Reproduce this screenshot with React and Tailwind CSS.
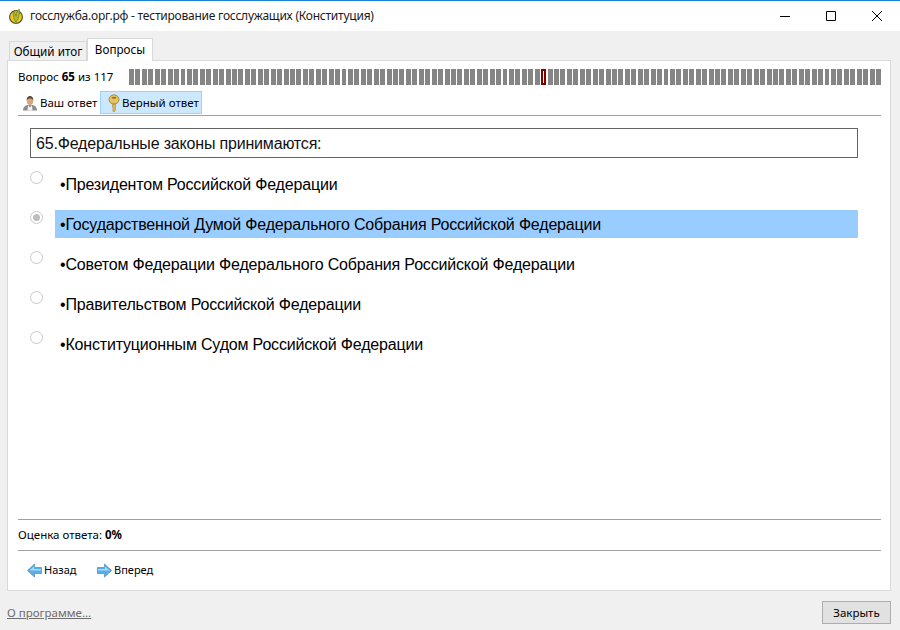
import React from "react";

const uiFont = "font-['Noto_Sans','DejaVu_Sans',sans-serif]";

const answers = [
  "Президентом Российской Федерации",
  "Государственной Думой Федерального Собрания Российской Федерации",
  "Советом Федерации Федерального Собрания Российской Федерации",
  "Правительством Российской Федерации",
  "Конституционным Судом Российской Федерации",
];

const Logo = () => (
  <svg width="16" height="16" viewBox="0 0 16 16">
    <circle cx="8" cy="9" r="6.4" fill="#f5c518" stroke="#5a5a3a" strokeWidth="1.2" />
    <path d="M8 14C5.500 11.500 4.800 7.500 5.800 4 7.300 5.300 8 6.800 8 8.300c0-2.300 1-5 3.200-7.300 .8 4.500-.3 9.800-3.200 13z" fill="#a8bd3a" stroke="#5d7020" strokeWidth=".6" />
  </svg>
);

const UserIcon = () => (
  <svg width="16" height="16" viewBox="0 0 16 16">
    <path d="M1 15.500c0-3.500 2-5 4.500-5.500h5c2.500 .5 4.500 2 4.500 5.500z" fill="#8b8b8b" />
    <path d="M6 10l2 2.500 2-2.500 .5 5.500h-5z" fill="#f0f0f0" />
    <ellipse cx="8" cy="6" rx="3.200" ry="4" fill="#d9a57f" />
    <path d="M4.700 5.500C4.500 2.500 6 1 8 1s3.500 1.500 3.300 4.500C10.500 4 9.500 3.500 8 3.500S5.500 4 4.700 5.500z" fill="#5a4436" />
  </svg>
);

const KeyIcon = () => (
  <svg width="14" height="19" viewBox="0 0 14 19" className="mt-[1px]">
    <ellipse cx="7" cy="5.500" rx="5" ry="4.600" fill="#e8c25e" stroke="#a98a3a" />
    <ellipse cx="7" cy="3.800" rx="2.400" ry="1" fill="#8f7430" />
    <path d="M5.600 10h2.800v6L7 18l-1.400-1.200 .9-.9-.9-.8 .9-.9-.9-.8z" fill="#e3bb55" stroke="#a98a3a" strokeWidth=".7" />
  </svg>
);

const ArrowIcon = ({ flip }) => (
  <svg width="15" height="15" viewBox="0 0 15 15" className={flip ? "-scale-x-100" : ""}>
    <path d="M.5 7.500L7.500 1v3.500h7v6h-7V14z" fill="#57ade8" stroke="#6f9fc4" />
    <path d="M2.500 7.500L7 3.500v2.500h7v1.500z" fill="#a9dbfa" />
  </svg>
);

const Radio = ({ checked }) => (
  <div className="w-[13px] h-[13px] mt-[1px] rounded-full border border-[#c9c9c9] bg-white flex items-center justify-center">
    {checked && <div className="w-[7px] h-[7px] rounded-full bg-[#bdbdbd]" />}
  </div>
);

const App = () => {
  const bars = Array.from({ length: 117 }, (_, i) => i + 1);

  return (
    <div className={`w-[900px] h-[630px] flex flex-col bg-[#f0f0f0] overflow-hidden text-[11.5px] text-black ${uiFont}`}>
      {/* title bar */}
      <div className="h-[31px] shrink-0 bg-white border-t border-[#1883d7] flex items-center">
        <div className="ml-[8px] mr-[6px] flex">
          <Logo />
        </div>
        <span className="text-[12px] tracking-[-0.23px] text-[#1a1a1a]">госслужба.орг.рф - тестирование госслужащих (Конституция)</span>
        <div className="ml-auto flex items-center">
          <svg width="46" height="30" viewBox="0 0 46 30">
            <path d="M18 15.500h10" stroke="#000" />
          </svg>
          <svg width="46" height="30" viewBox="0 0 46 30">
            <path d="M18.500 10.500h9v9h-9z" fill="none" stroke="#000" />
          </svg>
          <svg width="46" height="30" viewBox="0 0 46 30">
            <path d="M18 10l10 10M28 10L18 20" stroke="#000" />
          </svg>
        </div>
      </div>

      {/* tabs */}
      <div className="h-[29px] shrink-0 pl-[9px] pt-[6px] flex items-end text-[11.7px]">
        <div className="h-[20px] w-[78px] -mb-[1px] bg-[#f0f0f0] border border-b-0 border-[#d9d9d9] flex items-center justify-center">
          Общий итог
        </div>
        <div className="h-[23px] w-[66px] -mb-[1px] bg-white border border-b-0 border-[#d9d9d9] flex items-center justify-center relative z-10">
          Вопросы
        </div>
      </div>

      {/* panel */}
      <div className="ml-[7px] mr-[9px] h-[531px] shrink-0 bg-white border border-[#d9d9d9] flex flex-col pl-[10px] pr-[9px]">
        <div className="h-[16px] mt-[8px] flex items-center">
          <span className="w-[111px] shrink-0 whitespace-nowrap">
            Вопрос <b>65</b> из 117
          </span>
          <div className="flex-1 grid grid-cols-[repeat(117,1fr)] gap-x-[1.5px] h-[16px]">
            {bars.map((n) =>
              n === 65 ? (
                <div key={n} className="bg-white border-2 border-[#800000]" />
              ) : (
                <div key={n} className="bg-[#858585]" />
              )
            )}
          </div>
        </div>

        {/* answer toolbar */}
        <div className="h-[25px] mt-[6px] border-b border-[#a0a0a0] flex items-start pl-[3px]">
          <div className="h-[23px] w-[79px] flex items-center gap-[2px] pl-[1px] pt-[1px]">
            <UserIcon />
            <span className="whitespace-nowrap">Ваш ответ</span>
          </div>
          <div className="h-[23px] w-[102px] flex items-center gap-[1px] pl-[6px] pt-[1px] bg-[#cce8ff] border border-[#99d1ff]">
            <KeyIcon />
            <span className="whitespace-nowrap">Верный ответ</span>
          </div>
        </div>

        {/* question */}
        <div className="font-['Liberation_Sans',sans-serif] text-[16px] tracking-[-0.18px] pl-[12px] pr-[23px] mt-[12px]">
          <div className="h-[30px] border border-[#646464] flex items-center pl-[5px] pt-[2px] text-[#111]">
            65.Федеральные законы принимаются:
          </div>
          <div className="mt-[12px] flex flex-col gap-[12px]">
            {answers.map((a, i) => (
              <div key={a} className="flex h-[28px]">
                <div className="w-[25px] shrink-0">
                  <Radio checked={i === 1} />
                </div>
                <div className={`flex-1 flex items-center pl-[5px] pt-[2px] ${i === 1 ? "bg-[#99ccff]" : ""}`}>•{a}</div>
              </div>
            ))}
          </div>
        </div>

        {/* bottom */}
        <div className="mt-auto border-t border-[#a0a0a0] h-[31px] flex items-center">
          <span>
            Оценка ответа: <b>0%</b>
          </span>
        </div>
        <div className="border-t border-[#a0a0a0] h-[40px] flex items-center pl-[9px] text-[11px]">
          <div className="flex items-center gap-[2px] w-[70px]">
            <ArrowIcon />
            <span>Назад</span>
          </div>
          <div className="flex items-center gap-[2px]">
            <ArrowIcon flip />
            <span>Вперед</span>
          </div>
        </div>
      </div>

      {/* footer */}
      <div className="flex-1 flex items-start pl-[7px] pr-[9px] pt-[10px]">
        <a className="text-[#6d6d6d] underline mt-[3px]">О программе...</a>
        <button className="ml-auto w-[69px] h-[23px] bg-[#e1e1e1] border border-[#adadad] flex items-center justify-center">
          Закрыть
        </button>
      </div>
    </div>
  );
};

export default App;
